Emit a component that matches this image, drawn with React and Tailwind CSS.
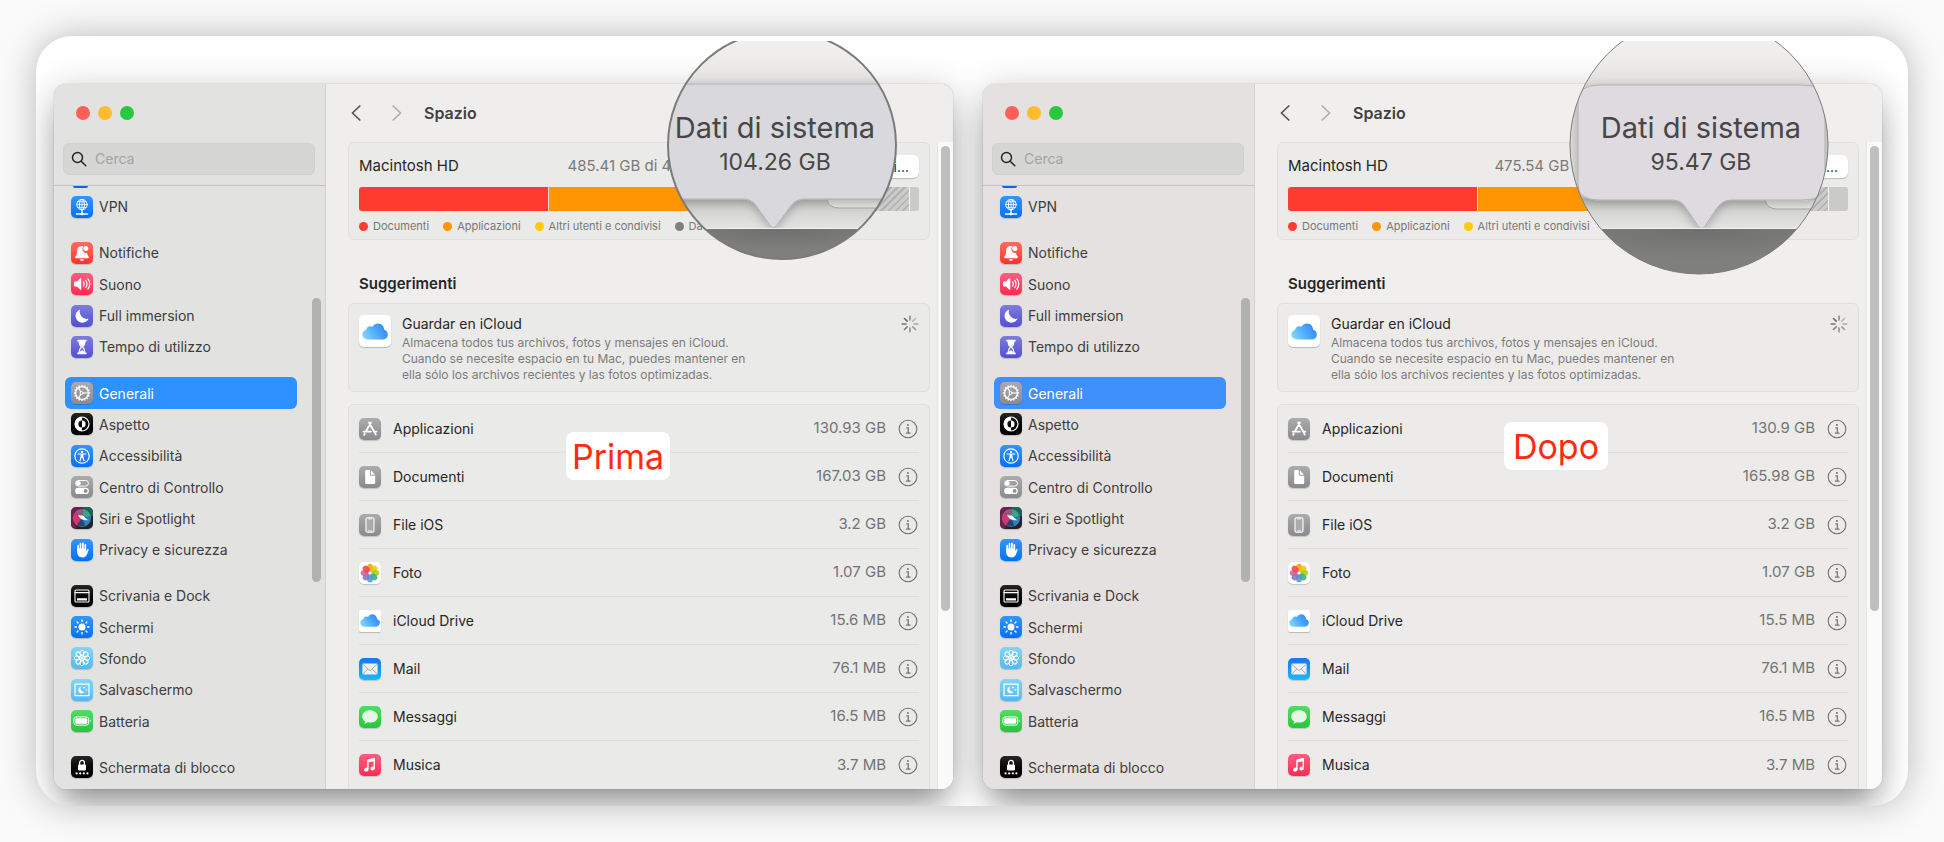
import { useId } from "react";

/* ---------- glyphs drawn on the small tiles (22 x 22 grid) ---------- */

const line = { fill: "none", stroke: "#fff", strokeLinecap: "round", strokeLinejoin: "round" };
const around = (n) => Array.from({ length: n }, (_, i) => (360 / n) * i);

const glyphs = {
  vpn: (
    <g {...line} strokeWidth="1">
      <circle cx="11" cy="8.600" r="5.200" />
      <ellipse cx="11" cy="8.600" rx="2.500" ry="5.200" />
      <path d="M11 3.400v10.400M5.800 8.600h10.400M6.800 5.800h8.400M6.800 11.400h8.400" strokeWidth=".8" />
      <path d="M11 14v4M5.400 18h11.200" strokeWidth="1.300" />
      <circle cx="11" cy="17.800" r="1.100" fill="#fff" />
    </g>
  ),
  bell: (
    <g fill="#fff">
      <path d="M10.500 4c-3 0-4.400 2.200-4.400 5 0 2.600-.5 4-1.700 5.400-.8.900-.4 1.800.6 1.800h12c1 0 1.400-.9.600-1.800-.9-1-1.400-2-1.600-3.400a4 4 0 0 1-4.400-5.200c.1-.6.400-1.100.8-1.600-.6-.1-1.200-.2-1.900-.2z" />
      <circle cx="14.800" cy="6.600" r="2.500" />
      <path d="M9 17.200h4c-.2 1-1 1.700-2 1.700s-1.800-.7-2-1.700z" />
    </g>
  ),
  speaker: (
    <g>
      <path d="M3 9.200c0-.5.300-.8.800-.8h2l3.400-3c.5-.4 1.100-.2 1.100.5v10.200c0 .7-.6.900-1.100.5l-3.400-3h-2c-.5 0-.8-.3-.8-.8z" fill="#fff" />
      <path d="M12.500 8.800c.9 1.300.9 3.100 0 4.400M14.700 7.300c1.600 2.200 1.600 5.200 0 7.400M16.900 5.900c2.200 3 2.200 7.200 0 10.200" {...line} strokeWidth="1.200" />
    </g>
  ),
  moon: <path d="M9.200 4.400a6.800 6.800 0 1 0 8.400 9.200A7 7 0 0 1 9.200 4.400z" fill="#fff" />,
  hourglass: (
    <g>
      <path d="M7 4.600h8M7 17.400h8" {...line} strokeWidth="1.700" />
      <path d="M8 5.200c0 3 .9 4.200 2.400 5.800-1.500 1.600-2.400 2.800-2.400 5.800h6c0-3-.9-4.200-2.400-5.800 1.500-1.600 2.400-2.800 2.400-5.800z" {...line} strokeWidth="1.200" />
      <path d="M8.300 5.200h5.400c0 2.200-.6 3.400-2.700 5.400-2.100-2-2.700-3.200-2.700-5.400zM8.700 16.800c.3-1.500 1.300-2.300 2.300-2.500 1 .2 2 1 2.300 2.500z" fill="#fff" />
    </g>
  ),
  gear: (
    <g {...line} strokeWidth="1.300">
      <circle cx="11" cy="11" r="6.400" />
      {around(16).map((a) => (
        <path key={a} d="M11 4.400V2.900" strokeWidth="1.400" strokeLinecap="butt" transform={`rotate(${a} 11 11)`} />
      ))}
      <circle cx="10.600" cy="11" r="1.500" strokeWidth="1" />
      <path d="M12.100 11h5M9.800 9.700L7.600 5.900M9.800 12.300l-2.200 3.800" strokeWidth="1.100" />
    </g>
  ),
  aspect: (
    <g>
      <circle cx="11" cy="11" r="7" fill="none" stroke="#fff" strokeWidth="1.200" />
      <path d="M11 4a7 7 0 0 0 0 14v-3.400a3.600 3.600 0 0 1 0-7.200z" fill="#fff" />
      <path d="M11 7.400a3.600 3.600 0 0 1 0 7.200z" fill="#fff" />
    </g>
  ),
  access: (
    <g>
      <circle cx="11" cy="11" r="7.200" {...line} strokeWidth="1.200" />
      <circle cx="11" cy="6.900" r="1.200" fill="#fff" />
      <path d="M7.200 9h7.600M10.100 12.300l-1.100 3.500M11.900 12.300l1.100 3.500" {...line} strokeWidth="1.200" />
      <path d="M9.600 9h2.800v3.800H9.600z" fill="#fff" />
    </g>
  ),
  toggles: (
    <g>
      <rect x="4.600" y="4.500" width="12.800" height="5.600" rx="2.800" {...line} strokeWidth="1" />
      <circle cx="7.400" cy="7.300" r="2.300" fill="#fff" />
      <rect x="4.200" y="11.700" width="13.600" height="6.400" rx="3.200" fill="#fff" />
      <circle cx="14.600" cy="14.900" r="1.900" fill="#8e8e93" />
    </g>
  ),
  siri: (
    <g>
      <path d="M0 0h11L8 11 5 22H0z" fill="#8d1f56" opacity=".75" />
      <path d="M11 0h11v9l-8 2z" fill="#1f6f62" opacity=".8" />
      <circle cx="11" cy="11" r="8.600" fill="#26456f" />
      <path d="M11 11L4.300 5.700A8.600 8.600 0 0 1 12 2.500z" fill="#a2517a" />
      <path d="M11 11l1-8.500a8.600 8.600 0 0 1 7.300 7z" fill="#3ba387" />
      <path d="M11 11l-6.700-5.300a8.600 8.600 0 0 0 1.600 12.200z" fill="#d8336d" />
      <path d="M11 11l8.400-1a8.600 8.600 0 0 1-5 8.900z" fill="#2b7fc4" />
      <path d="M7 8.400c4-.6 7 1.600 10 4.800-4 .6-8-1.400-10-4.800z" fill="#e9f6ff" />
      <circle cx="11.200" cy="10.500" r="1.900" fill="#fff" opacity=".8" />
      <circle cx="11" cy="11" r="8.600" fill="none" stroke="#7fa6bf" strokeWidth=".6" opacity=".7" />
    </g>
  ),
  hand: (
    <g>
      <path d="M7.100 11V6.700M9.500 10V4.600M11.900 10V4.300M14.300 11V5.900" {...line} strokeWidth="1.700" />
      <path d="M6.250 9.500h8.900v2.700l1.100-1.900c.4-.7 1.700-.5 1.400.5l-1.500 4.200c-.8 2.300-2.300 3.400-4.600 3.400-3.300 0-5.300-2-5.300-5.200z" fill="#fff" />
    </g>
  ),
  dock: (
    <g>
      <rect x="4" y="5" width="14" height="12" rx="1" {...line} strokeWidth="1.100" />
      <path d="M4 7.600h14" {...line} strokeWidth="1.100" />
      <path d="M6 13.200h10v2.200H6z" fill="#fff" />
    </g>
  ),
  sun: (
    <g>
      <circle cx="11" cy="11" r="3.500" fill="#fff" />
      {around(8).map((a) => (
        <path key={a} d="M11 5.400V4" {...line} strokeWidth="1.400" transform={`rotate(${a} 11 11)`} />
      ))}
    </g>
  ),
  flower: (
    <g fill="none" stroke="#fff" strokeWidth="1">
      {around(8).map((a) => (
        <ellipse key={a} cx="11" cy="5.900" rx="2.100" ry="2.600" transform={`rotate(${a} 11 11)`} />
      ))}
      <circle cx="11" cy="11" r="2.400" />
      {around(8).map((a) => (
        <path key={a} d="M11 11V8.600" transform={`rotate(${a} 11 11)`} strokeWidth=".7" />
      ))}
    </g>
  ),
  saver: (
    <g>
      <rect x="4" y="5.200" width="14" height="11.400" {...line} strokeWidth="1.200" />
      <path d="M9.900 7.700a3.400 3.400 0 1 0 3.700 4.900 3.300 3.300 0 0 1-3.700-4.900z" fill="#fff" />
      <path d="M12.500 8.600h1.200M15 10.800h.8" {...line} strokeWidth="1.100" />
    </g>
  ),
  battery: (
    <g>
      <rect x="2.900" y="6.900" width="14.800" height="8.200" rx="2.400" {...line} strokeWidth="1" />
      <rect x="4.300" y="8.300" width="12" height="5.400" rx="1.300" fill="#fff" />
      <path d="M18.900 9.600c1 .5 1 2.300 0 2.800z" fill="#fff" />
    </g>
  ),
  lock: (
    <g>
      <rect x="7" y="8.400" width="8" height="6.200" rx="1.100" fill="#fff" />
      <path d="M8.600 8.600V6.800a2.400 2.400 0 0 1 4.800 0v1.800" {...line} strokeWidth="1.300" />
      {[5.600, 9.200, 12.800, 16.400].map((x) => (
        <circle key={x} cx={x} cy="17.400" r="1.100" fill="#fff" />
      ))}
    </g>
  ),
  store: (
    <g {...line} strokeWidth="1.900">
      <path d="M11.900 4.600L7.100 13M10.100 4.600l5.600 9.900M4.600 13.600h7.300M15 13.600h2.400M5.700 15.800l-.5.900M16.400 15.800l.4.800" />
    </g>
  ),
  doc: (
    <g fill="#fff">
      <path d="M6.200 5.300c0-.8.500-1.300 1.300-1.300h3.300v4.600c0 .8.400 1.200 1.200 1.200h4.200v6.900c0 .8-.5 1.300-1.300 1.300H7.500c-.8 0-1.300-.5-1.300-1.300z" />
      <path d="M11.800 4.200l4.200 4.500h-3.500c-.4 0-.7-.3-.7-.7z" />
    </g>
  ),
  phone: (
    <g>
      <rect x="7" y="3.700" width="8" height="14.600" rx="1.500" fill="#ababad" stroke="#fff" strokeWidth="1.100" />
      <path d="M9.600 4.900h2.800M9.400 17h3.200" {...line} strokeWidth=".9" />
    </g>
  ),
  photos: (
    <g>
      {["#f89b1c", "#f5c400", "#a4cc1e", "#3fae66", "#4296e0", "#8078c4", "#c85f9e", "#f0443c"].map((c, i) => (
        <ellipse key={c} cx="11" cy="5.600" rx="3" ry="3.900" fill={c} opacity=".86" transform={`rotate(${i * 45} 11 11)`} />
      ))}
    </g>
  ),
  mail: (
    <g>
      <rect x="3.400" y="5.600" width="15.200" height="10.800" rx="1.200" fill="#efefef" />
      <path d="M3.800 6.200l6 5.600c.8.700 1.600.7 2.400 0l6-5.600M3.900 15.900l5-4.900M18.100 15.900l-5-4.900" fill="none" stroke="#9a9a9a" strokeWidth=".8" />
    </g>
  ),
  bubble: (
    <path d="M11 4.200c-4.400 0-7.800 2.700-7.800 6.200 0 2.100 1.200 3.900 3.100 5-.2.900-.7 1.600-1.300 2.200 1.400 0 2.600-.5 3.600-1.300.8.200 1.600.3 2.400.3 4.400 0 7.800-2.700 7.800-6.200S15.400 4.200 11 4.200z" fill="#e6f6e5" />
  ),
  music: (
    <g fill="#fff">
      <path d="M8.200 6.300c0-.6.300-.9.800-1l6.100-1.200c.5-.1.900.2.900.7v2.200L9.600 8.300v7h-1.400z" />
      <path d="M14.600 6h1.400v8.200h-1.400z" />
      <ellipse cx="7.300" cy="15.600" rx="2.300" ry="1.900" transform="rotate(-15 7.300 15.600)" />
      <ellipse cx="13.700" cy="14.400" rx="2.300" ry="1.900" transform="rotate(-15 13.700 14.400)" />
    </g>
  ),
};

function Cloud({ className }) {
  const id = useId();
  return (
    <svg viewBox="0 0 26 17" className={className} aria-hidden="true">
      <defs>
        <linearGradient id={id} x1="0" x2="1" y1=".7" y2=".3">
          <stop offset="0" stopColor="#85d5fb" />
          <stop offset=".45" stopColor="#52b0fa" />
          <stop offset="1" stopColor="#2f86f2" />
        </linearGradient>
      </defs>
      <path
        d="M6 16.500C2.600 16.500.3 14.400.3 11.600c0-2.400 1.600-4.200 3.800-4.700.3-2.300 2-3.700 4-3.700.9 0 1.600.2 2.300.6C11.500 1.700 13.500.4 15.900.4c3.600 0 6.200 2.800 6.300 6.400 2.100.5 3.600 2.300 3.600 4.600 0 2.900-2.200 5.100-5.200 5.100z"
        fill={`url(#${id})`}
      />
    </svg>
  );
}

const tiles = {
  blue: "bg-linear-to-b from-[#3395ff] to-[#0070f8]",
  red: "bg-linear-to-b from-[#ff6a61] to-[#ff3027]",
  pink: "bg-linear-to-b from-[#ff5c80] to-[#ff2651]",
  violet: "bg-linear-to-b from-[#7f7ce0] to-[#5250cf]",
  gray: "bg-linear-to-b from-[#acacae] to-[#8a8a8e]",
  black: "bg-linear-to-b from-[#262626] to-[#000000]",
  siri: "bg-[#20242e]",
  sky: "bg-linear-to-b from-[#80d6fb] to-[#55b9ee]",
  green: "bg-linear-to-b from-[#4fdd63] to-[#25c53c]",
  white: "bg-white",
  mail: "bg-linear-to-b from-[#1c74f2] to-[#1db8fb]",
};

function Tile({ tone, glyph }) {
  return (
    <span className={`flex size-[22px] shrink-0 items-center justify-center overflow-hidden rounded-[5px] shadow-[0_1px_1px_rgba(0,0,0,0.18)] ${tiles[tone]}`}>
      <svg viewBox="0 0 22 22" className="size-[22px]" aria-hidden="true">
        {glyphs[glyph]}
      </svg>
    </span>
  );
}

/* ---------- data ---------- */

const navGroups = [
  [["VPN", "blue", "vpn"]],
  [
    ["Notifiche", "red", "bell"],
    ["Suono", "pink", "speaker"],
    ["Full immersion", "violet", "moon"],
    ["Tempo di utilizzo", "violet", "hourglass"],
  ],
  [
    ["Generali", "gray", "gear"],
    ["Aspetto", "black", "aspect"],
    ["Accessibilità", "blue", "access"],
    ["Centro di Controllo", "gray", "toggles"],
    ["Siri e Spotlight", "siri", "siri"],
    ["Privacy e sicurezza", "blue", "hand"],
  ],
  [
    ["Scrivania e Dock", "black", "dock"],
    ["Schermi", "blue", "sun"],
    ["Sfondo", "sky", "flower"],
    ["Salvaschermo", "sky", "saver"],
    ["Batteria", "green", "battery"],
  ],
  [["Schermata di blocco", "black", "lock"]],
];

const categories = [
  ["Applicazioni", "gray", "store"],
  ["Documenti", "gray", "doc"],
  ["File iOS", "gray", "phone"],
  ["Foto", "white", "photos"],
  ["iCloud Drive", "white", "cloud"],
  ["Mail", "mail", "mail"],
  ["Messaggi", "green", "bubble"],
  ["Musica", "pink", "music"],
];

const legend = [
  ["Documenti", "bg-[#ff3b30]"],
  ["Applicazioni", "bg-[#ff9500]"],
  ["Altri utenti e condivisi", "bg-[#ffcc00]"],
  ["Dati di sistema", "bg-[#7f7f7f]"],
];

const before = {
  id: "prima",
  used: "485.41 GB di 494.38 GB utilizzati",
  sizes: ["130.93 GB", "167.03 GB", "3.2 GB", "1.07 GB", "15.6 MB", "76.1 MB", "16.5 MB", "3.7 MB"],
  sidebar: "bg-[#e2e2e0]",
  main: "bg-[#efeeec]",
  card: "bg-[#eaeae8]",
  selected: "bg-[#2d92ff]",
  free: "w-2.5",
};

const after = {
  id: "dopo",
  used: "475.54 GB di 494.38 GB utilizzati",
  sizes: ["130.9 GB", "165.98 GB", "3.2 GB", "1.07 GB", "15.5 MB", "76.1 MB", "16.5 MB", "3.7 MB"],
  sidebar: "bg-[#e5e1e0]",
  main: "bg-[#f0efed]",
  card: "bg-[#ecebe9]",
  selected: "bg-[#4090fc]",
  free: "w-5",
};

/* ---------- window ---------- */

function Sidebar({ data }) {
  return (
    <aside className={`flex w-[272px] shrink-0 flex-col border-r border-[#d3d2d0] ${data.sidebar}`}>
      <div className="flex gap-2 px-[22px] pt-[22px]">
        <button type="button" aria-label="Chiudi" className="size-3.5 rounded-full bg-[#ff5f57]" />
        <button type="button" aria-label="Riduci" className="size-3.5 rounded-full bg-[#febc2e]" />
        <button type="button" aria-label="Ingrandisci" className="size-3.5 rounded-full bg-[#28c840]" />
      </div>
      <div className="mr-2.5 mb-2.5 ml-[9px] mt-[23px] flex h-8 items-center gap-2 rounded-md border border-[#d0d0ce] bg-[#d6d6d4] px-[7px]">
        <label htmlFor={`cerca-${data.id}`} className="shrink-0">
          <svg viewBox="0 0 16 16" role="img" aria-label="Cerca" className="size-4" fill="none" stroke="#262626" strokeWidth="1.500" strokeLinecap="round">
            <circle cx="6.500" cy="6.500" r="5" />
            <path d="M10.200 10.200l4.600 4.600" />
          </svg>
        </label>
        <input id={`cerca-${data.id}`} type="search" placeholder="Cerca" className="w-full min-w-0 bg-transparent text-sm outline-none placeholder:text-[#a3a3a2]" />
      </div>
      <div className="flex flex-1 border-t border-[#c3c2c1]">
        <nav aria-label="Impostazioni" className="flex flex-1 flex-col pr-[15px] pb-1.5 pl-[11px]">
          <span className="mb-[3px] ml-2 h-0.5 w-[15px] rounded-b-xs bg-[#1266dd]" />
          {navGroups.map((group, g) => (
            <div key={g} className={`flex flex-col ${g ? "mt-[15px]" : ""}`} style={{ flexGrow: group.length }}>
              {group.map(([label, tone, glyph]) => {
                const on = label === "Generali";
                return (
                  <a
                    key={label}
                    href="#"
                    aria-current={on ? "page" : undefined}
                    className={`flex flex-1 items-center gap-1.5 rounded-md px-1.5 text-sm leading-[31px] ${on ? `text-white ${data.selected}` : "text-[#3d3d3c]"}`}
                  >
                    <Tile tone={tone} glyph={glyph} />
                    {label}
                  </a>
                );
              })}
            </div>
          ))}
        </nav>
        <div className="w-[13px] pt-28">
          <div className="h-[284px] w-[9px] rounded-full bg-[#b1b1b0]" />
        </div>
      </div>
    </aside>
  );
}

function DiskCard({ data }) {
  return (
    <section className={`rounded-md border border-[#e0dfdd] px-2.5 pt-3 pb-1.5 ${data.card}`}>
      <div className="flex h-[23px] items-center text-[15px] whitespace-nowrap">
        <h2 className="text-[#262626]">Macintosh HD</h2>
        <p className="mr-1 ml-auto text-[#7a7a79]">{data.used}</p>
        <button type="button" className="h-[23px] rounded-md bg-white px-2.5 text-sm text-[#262626] shadow-[0_1px_1px_rgba(0,0,0,0.2)]">
          Tutti i volumi...
        </button>
      </div>
      <div className="mt-[9px] flex h-6 overflow-hidden rounded-[3px]">
        <div className="w-[190px] shrink-0 border-r border-white/80 bg-[#ff3b30]" />
        <div className="w-[200px] shrink-0 border-r border-white/80 bg-[#ff9500]" />
        <div className="w-20 shrink-0 bg-[#7f7f7f]" />
        <div className="flex-1 bg-[repeating-linear-gradient(135deg,#cbcbca_0px,#cbcbca_3px,#b2b2b1_3px,#b2b2b1_5px)]" />
        <div className={`shrink-0 border-l border-white/80 bg-[#cacac9] ${data.free}`} />
      </div>
      <ul className="mt-2 flex gap-3.5 text-[11px] leading-[14px] whitespace-nowrap text-[#787877]">
        {legend.map(([label, dot]) => (
          <li key={label} className="flex items-center gap-[5px]">
            <span className={`size-[9px] rounded-full ${dot}`} />
            {label}
          </li>
        ))}
      </ul>
    </section>
  );
}

function Spinner() {
  const shades = ["#8b8b8b", "#b5b5b4", "#a9a9a8", "#9c9c9b", "#8f8f8e", "#828281", "#757574", "#6b6b6a"];
  return (
    <svg viewBox="0 0 18 18" className="size-[18px]" role="img" aria-label="Caricamento">
      {shades.map((c, i) => (
        <path key={c} d="M9 5V1.200" stroke={c} strokeWidth="1.600" strokeLinecap="round" transform={`rotate(${i * 45} 9 9)`} />
      ))}
    </svg>
  );
}

function InfoIcon() {
  return (
    <svg viewBox="0 0 20 20" className="size-5" fill="none" stroke="#737372" aria-hidden="true">
      <circle cx="10" cy="10" r="8.800" strokeWidth="1.100" />
      <circle cx="9.900" cy="5.900" r="1" fill="#737372" stroke="none" />
      <path d="M8.300 8.800h2v5.200M7.900 14.100h4.600" strokeWidth="1.200" />
    </svg>
  );
}

function SettingsWindow({ data, label, labelClass }) {
  return (
    <section className="relative flex min-w-0 flex-1 rounded-xl shadow-[0_0_1px_rgba(0,0,0,0.45),0_4px_36px_rgba(0,0,0,0.2),0_22px_32px_-8px_rgba(0,0,0,0.34)]">
      <div className="flex min-w-0 flex-1 overflow-hidden rounded-xl">
        <Sidebar data={data} />
        <main className={`flex min-w-0 flex-1 flex-col ${data.main}`}>
          <header className="flex h-[58px] items-center pl-[25px]">
            <button type="button" aria-label="Indietro">
              <svg viewBox="0 0 10 16" className="h-4 w-2.5" fill="none" stroke="#555554" strokeWidth="1.700" strokeLinecap="round" strokeLinejoin="round">
                <path d="M8.800 1L1.400 8l7.400 7" />
              </svg>
            </button>
            <button type="button" aria-label="Avanti" className="ml-[31px]">
              <svg viewBox="0 0 10 16" className="h-4 w-2.5" fill="none" stroke="#adadac" strokeWidth="1.700" strokeLinecap="round" strokeLinejoin="round">
                <path d="M1.200 1l7.400 7-7.400 7" />
              </svg>
            </button>
            <h1 className="ml-[22px] text-base font-semibold text-[#414140]">Spazio</h1>
          </header>
          <div className="flex flex-1">
            <div className="flex min-w-0 flex-1 flex-col pr-[7px] pl-[22px]">
              <DiskCard data={data} />
              <h2 className="mt-8 mb-[7px] ml-[11px] text-[15px] leading-6 font-semibold text-[#262626]">Suggerimenti</h2>
              <section className={`flex h-[89px] rounded-md border border-[#e0dfdd] px-2.5 pt-[11px] ${data.card}`}>
                <span className="flex size-8 shrink-0 items-center justify-center rounded-[5px] bg-white shadow-[0_1px_1px_rgba(0,0,0,0.22)]">
                  <Cloud className="w-[26px]" />
                </span>
                <div className="ml-[11px] w-[370px]">
                  <h3 className="text-sm leading-[18px] text-[#262626]">Guardar en iCloud</h3>
                  <p className="mt-0.5 text-xs leading-4 text-[#7c7c7b]">
                    Almacena todos tus archivos, fotos y mensajes en iCloud.
                    <br />
                    Cuando se necesite espacio en tu Mac, puedes mantener en
                    <br />
                    ella sólo los archivos recientes y las fotos optimizadas.
                  </p>
                </div>
                <span className="ml-auto">
                  <Spinner />
                </span>
              </section>
              <ul className={`mt-3 rounded-t-md border border-b-0 border-[#e0dfdd] px-2.5 ${data.card}`}>
                {categories.map(([name, tone, glyph], i) => (
                  <li key={name} className={`flex h-12 items-center text-[15px] ${i < 7 ? "border-b border-[#dedddb]" : ""}`}>
                    {glyph === "cloud" ? (
                      <span className="flex size-[22px] items-center justify-center rounded-xs bg-white shadow-[0_1px_1px_rgba(0,0,0,0.22)]">
                        <Cloud className="w-5" />
                      </span>
                    ) : (
                      <Tile tone={tone} glyph={glyph} />
                    )}
                    <span className="ml-3 text-sm text-[#262626]">{name}</span>
                    <span className="ml-auto text-[#737372]">{data.sizes[i]}</span>
                    <button type="button" aria-label={`Informazioni su ${name}`} className="ml-3 pr-px">
                      <InfoIcon />
                    </button>
                  </li>
                ))}
              </ul>
            </div>
            <div className="w-4 border-l border-[#e6e5e3] bg-[#fafaf9] pt-1 pl-[3px]">
              <div className="h-[465px] w-[9px] rounded-full bg-[#bfbfbe]" />
            </div>
          </div>
        </main>
      </div>
      <strong className={`absolute flex h-12 w-[104px] items-center justify-center rounded-lg bg-white text-[34px] font-normal text-[#ff2a10] ${labelClass}`}>
        {label}
      </strong>
      {data.id === "prima" ? <LensBefore /> : <LensAfter />}
    </section>
  );
}

/* ---------- magnifier lenses laid over the windows ---------- */

function LensDefs({ id, r, cx }) {
  return (
    <defs>
      <clipPath id={`${id}-c`}>
        <circle cx={cx} cy="104" r={r} />
      </clipPath>
      <linearGradient id={`${id}-t`} x1="0" x2="0" y1="0" y2="1">
        <stop offset="0" stopColor="#f1f0ef" />
        <stop offset=".6" stopColor="#ebeae9" />
        <stop offset="1" stopColor="#dddcdb" />
      </linearGradient>
      <linearGradient id={`${id}-b`} x1="0" x2="0" y1="0" y2="1">
        <stop offset="0" stopColor="#c2c2c1" />
        <stop offset=".5" stopColor="#d6d6d5" />
        <stop offset="1" stopColor="#e3e3e2" />
      </linearGradient>
      <radialGradient id={`${id}-d`} cx=".5" cy="0" r=".6">
        <stop offset="0" stopColor="#6f6f6d" />
        <stop offset="1" stopColor="#7f7f7d" />
      </radialGradient>
      <filter id={`${id}-s`} x="-20%" y="-20%" width="140%" height="150%">
        <feDropShadow dx="0" dy="3" stdDeviation="5" floodOpacity=".25" />
      </filter>
    </defs>
  );
}

function LensBefore() {
  const id = useId();
  return (
    <div className="absolute -top-[43px] right-[56px] h-[220px] w-[230px]">
      <svg viewBox="0 0 230 220" className="size-full" aria-hidden="true">
        <LensDefs id={id} r="114" cx="115" />
        <g clipPath={`url(#${id}-c)`}>
          <rect width="230" height="44" fill={`url(#${id}-t)`} />
          <rect y="157" width="230" height="30" fill={`url(#${id}-b)`} />
          <path d="M160 158v1q2 8 12 8h58v-9z" fill="#e6e6e5" stroke="#a9a9a8" strokeWidth="1" />
          <path d="M-10 43h250v115H138c-8 0-12 4-15 8l-13 18c-3 3.500-5 3.500-7 0L90 166c-3-5-7-8-15-8H-10z" fill="#d9d8dd" stroke="#b3b3b4" strokeWidth="1" filter={`url(#${id}-s)`} />
          <rect y="188" width="230" height="34" fill={`url(#${id}-d)`} />
          <path d="M0 187.500h230" stroke="#f1f1f0" />
        </g>
        <circle cx="115" cy="104" r="114" fill="none" stroke="#7b7b7a" strokeWidth="2" />
      </svg>
      <p className="absolute top-[69px] left-0 w-[216px] text-center text-[#474746]">
        <span className="block text-[29px] leading-9 whitespace-nowrap">Dati di sistema</span>
        <span className="block text-[23px] leading-8">104.26 GB</span>
      </p>
    </div>
  );
}

function LensAfter() {
  const id = useId();
  return (
    <div className="absolute -top-[43px] right-[53px] h-[234px] w-[260px]">
      <svg viewBox="0 0 260 234" className="size-full" aria-hidden="true">
        <LensDefs id={id} r="129" cx="130" />
        <g clipPath={`url(#${id}-c)`}>
          <rect width="260" height="240" fill="#dddcda" />
          <rect width="260" height="44" fill={`url(#${id}-t)`} />
          <rect y="157" width="260" height="30" fill={`url(#${id}-b)`} />
          <path d="M196 158v1q2 9 12 9h48v-10z" fill="#e6e6e5" stroke="#a9a9a8" strokeWidth="1" />
          <path d="M30 44h204q22 0 22 16v84q0 15-22 15H163c-8 0-12 4-15 8l-12 18c-2 3-5 3-7 0l-12-18c-3-5-7-8-15-8H30q-21 0-21-15V60q0-16 21-16z" fill="#dedadf" stroke="#b1b0b1" strokeWidth="1" filter={`url(#${id}-s)`} />
          <rect y="188" width="260" height="50" fill={`url(#${id}-d)`} />
          <path d="M0 187.500h260" stroke="#f1f1f0" />
        </g>
        <circle cx="130" cy="104" r="129" fill="none" stroke="#7b7b7a" strokeWidth="1" />
      </svg>
      <p className="absolute top-[69px] left-0 w-[264px] text-center text-[#474746]">
        <span className="block text-[29px] leading-9 whitespace-nowrap">Dati di sistema</span>
        <span className="block text-[23px] leading-8">95.47 GB</span>
      </p>
    </div>
  );
}

export default function App() {
  return (
    <div className="min-h-screen bg-[#fafafa] p-9 font-[Inter,'Liberation_Sans',sans-serif]">
      <div className="flex gap-[30px] overflow-hidden rounded-[36px] bg-white pt-12 pr-[26px] pb-[17px] pl-[18px] shadow-[0_0_36px_rgba(0,0,0,0.26)]">
        <SettingsWindow data={before} label="Prima" labelClass="top-[348px] right-[283px]" />
        <SettingsWindow data={after} label="Dopo" labelClass="top-[338px] right-[274px]" />
      </div>
    </div>
  );
}
